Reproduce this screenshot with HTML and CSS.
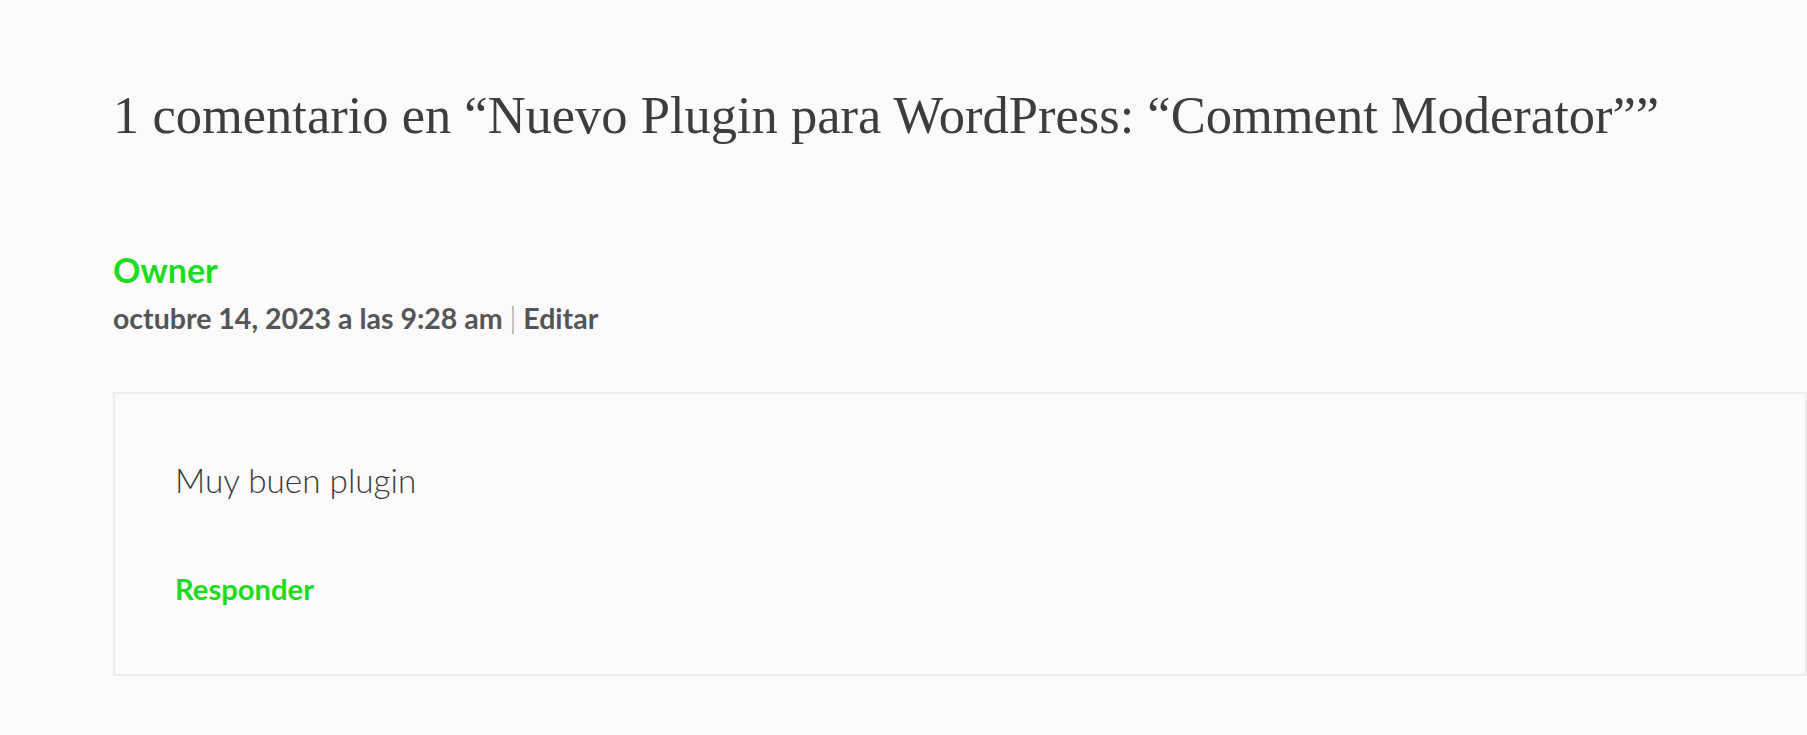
FILE: index.html
```html
<!DOCTYPE html>
<html lang="es">
<head>
<meta charset="utf-8">
<title>Comentarios</title>
<link rel="stylesheet" href="styles.css">
</head>
<body>
<section class="comments">
  <h2 class="comments-title">1 comentario en “Nuevo Plugin para WordPress: “Comment Moderator””</h2>
  <article class="comment">
    <div class="comment-meta">
      <div class="comment-author">Owner</div>
      <div class="comment-date">octubre 14, 2023 a las 9:28 am <span class="sep">|</span> <a class="edit-link" href="#">Editar</a></div>
    </div>
    <div class="comment-body">
      <p class="comment-text">Muy buen plugin</p>
      <a class="reply-link" href="#">Responder</a>
    </div>
  </article>
</section>
</body>
</html>
```
FILE: styles.css
```css
html, body {
  margin: 0;
  padding: 0;
  background: #fbfbfb;
}
body {
  font-family: Lato, "Open Sans", sans-serif;
  color: #3a3a3a;
}
.comments {
  padding: 85px 0 0 113px;
}
.comments-title {
  margin: 0;
  font-family: "Liberation Serif", "DejaVu Serif", serif;
  font-weight: 400;
  font-size: 52.5px;
  line-height: 60px;
  color: #3d3d3d;
  white-space: nowrap;
}
.comment-meta {
  margin-top: 105px;
}
.comment-author {
  font-weight: 700;
  font-size: 34px;
  line-height: 40px;
  color: #1cdd1c;
}
.comment-date {
  margin-top: 11px;
  font-weight: 700;
  font-size: 28.5px;
  line-height: 34px;
  color: #555;
}
.sep {
  font-weight: 300;
  color: #9a9a9a;
}
.edit-link {
  color: #555;
  text-decoration: none;
}
.comment-body {
  margin-top: 57px;
  border: 2px solid #ececec;
  padding: 66px 60px 67px 60px;
}
.comment-text {
  margin: 0;
  font-weight: 300;
  font-size: 33.3px;
  line-height: 40px;
  color: #3a3a3a;
}
.reply-link {
  display: block;
  margin-top: 71px;
  font-weight: 700;
  font-size: 29.2px;
  line-height: 36px;
  color: #1cdd1c;
  text-decoration: none;
}
```
